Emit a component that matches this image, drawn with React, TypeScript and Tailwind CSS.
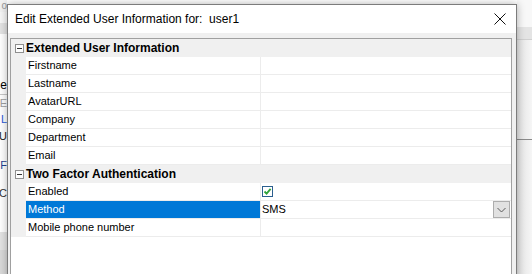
import React from 'react';

type Row = { label: string; value?: React.ReactNode; selected?: boolean };

const extended: Row[] = [
  { label: 'Firstname' },
  { label: 'Lastname' },
  { label: 'AvatarURL' },
  { label: 'Company' },
  { label: 'Department' },
  { label: 'Email' },
];

const CheckBox = () => (
  <div className="w-[11px] h-[11px] border border-[#2b5f8e] bg-white flex items-center justify-center">
    <svg width="9" height="9" viewBox="0 0 9 9">
      <path d="M1.5 4.5 L3.6 6.6 L7.6 1.8" fill="none" stroke="#2fa33a" strokeWidth="1.8" />
    </svg>
  </div>
);

const DropButton = () => (
  <div className="w-[17px] h-[17px] mr-[1px] border border-[#adadad] bg-[#e1e1e1] flex items-center justify-center">
    <svg width="9" height="6" viewBox="0 0 9 6">
      <path d="M0.5 1 L4.5 5 L8.5 1" fill="none" stroke="#5a5a5a" strokeWidth="1" />
    </svg>
  </div>
);

const Category = ({ title }: { title: string }) => (
  <div className="h-[18px] bg-[#f0f0f0] flex items-center">
    <div className="w-[15px] flex justify-center pl-[1px]">
      <div className="w-[9px] h-[9px] border border-[#8f8f8f] bg-[#fdfdfd] flex items-center justify-center">
        <div className="w-[5px] h-px bg-[#333]" />
      </div>
    </div>
    <span className="text-[12px] font-bold text-black leading-none">{title}</span>
  </div>
);

const PropRow = ({ label, value, selected }: Row) => (
  <div className="h-[18px] flex">
    <div className="w-[15px] bg-[#f0f0f0]" />
    <div
      className={
        'w-[234px] border-b border-[#ececec] flex items-center pl-[2px] text-[11px] ' +
        (selected ? 'bg-[#0078d7] text-white border-[#0078d7]' : 'bg-white text-black')
      }
    >
      {label}
    </div>
    <div className="w-px bg-[#ececec]" />
    <div className="flex-1 border-b border-[#ececec] flex items-center pl-[1px] text-[11px] text-black">
      {value}
    </div>
  </div>
);

const LeftStrip = () => (
  <div className="w-[7px] h-full flex flex-col bg-white overflow-hidden text-[12px] leading-none">
    <div className="h-[12px] bg-[#f2f2f2] flex justify-end items-center text-[#9a9a9a] text-[10px]">o</div>
    <div className="h-[11px] bg-[#f7f7f7]" />
    <div className="h-[11px] bg-[#e3e3e3]" />
    <div className="h-[42px]" />
    <div className="h-[18px] flex justify-end items-center text-black">e</div>
    <div className="h-px bg-[#c8c8c8]" />
    <div className="h-[16px] flex justify-end items-center text-[#a0a0a0] text-[11px]">E</div>
    <div className="h-[16px] flex justify-end items-center text-[#2a5bd7] text-[11px]">L</div>
    <div className="h-[18px] flex justify-end items-center text-[#222] text-[11px]">U</div>
    <div className="h-[12px]" />
    <div className="h-[16px] flex justify-end items-center text-[#1f3f8f] text-[11px]">F</div>
    <div className="h-[12px]" />
    <div className="h-[16px] flex justify-end items-center text-[#333] text-[11px]">C</div>
    <div className="h-[31px]" />
    <div className="h-[18px] bg-[#e3e3e3]" />
    <div className="flex-1 bg-[#d9d9d9]" />
  </div>
);

const RightStrip = () => (
  <div className="w-[15px] h-full flex flex-col bg-gradient-to-r from-[#e2e2e2] to-[#f6f6f6]">
    <div className="h-[27px] bg-[#f8f8f8]" />
    <div className="h-[13px] bg-[#e4e4e4] border-b border-[#d0d0d0]" />
    <div className="h-[99px]" />
    <div className="h-px bg-[#8a8a8a]" />
    <div className="flex-1" />
  </div>
);

export default function App() {
  return (
    <div className="w-[532px] h-[274px] overflow-hidden flex bg-white font-['Liberation_Sans',Arial,sans-serif]">
      <LeftStrip />

      <div className="relative z-10 w-[510px] h-[300px] mt-[4px] border border-[#7c7c7c] bg-[#f0f0f0] flex flex-col shadow-[0_0_8px_rgba(0,0,0,0.3)]">
        {/* title bar */}
        <div className="h-[28px] bg-white flex items-center justify-between pl-[7px] pr-[10px]">
          <span className="text-[12px] text-black">Edit Extended User Information for:&nbsp; user1</span>
          <svg width="12" height="12" viewBox="0 0 12 12">
            <path d="M0.5 0.5 L11.5 11.5 M11.5 0.5 L0.5 11.5" stroke="#111" strokeWidth="1" />
          </svg>
        </div>

        {/* property grid */}
        <div className="flex-1 pt-[5px] pl-[2px] pr-[4px]">
          <div className="h-full border border-[#a0a0a0] bg-white flex flex-col">
            <Category title="Extended User Information" />
            {extended.map((r) => (
              <PropRow key={r.label} label={r.label} />
            ))}
            <Category title="Two Factor Authentication" />
            <PropRow label="Enabled" value={<CheckBox />} />
            <PropRow
              label="Method"
              selected
              value={
                <div className="flex-1 flex items-center justify-between">
                  <span>SMS</span>
                  <DropButton />
                </div>
              }
            />
            <PropRow label="Mobile phone number" />
          </div>
        </div>
      </div>

      <RightStrip />
    </div>
  );
}
